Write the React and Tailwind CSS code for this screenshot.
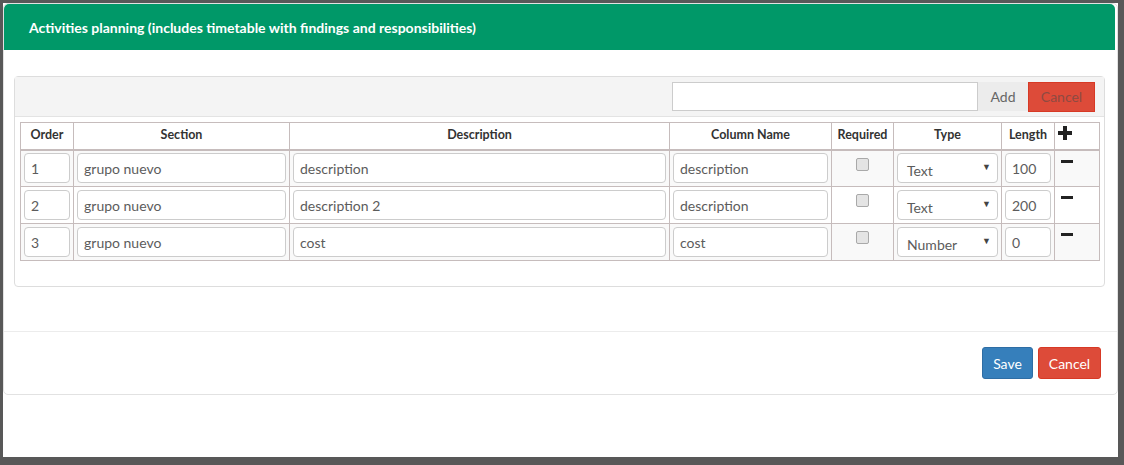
import React from 'react';

const rows = [
  { order: '1', section: 'grupo nuevo', desc: 'description', col: 'description', type: 'Text', len: '100' },
  { order: '2', section: 'grupo nuevo', desc: 'description 2', col: 'description', type: 'Text', len: '200' },
  { order: '3', section: 'grupo nuevo', desc: 'cost', col: 'cost', type: 'Number', len: '0' },
];

const inputCls = 'h-[30px] w-full border border-[#ccc] rounded-[4px] bg-white px-[6px] flex items-center text-[14px] text-[#5c5c5c]';

const App = () => {
  return (
    <div className="w-[1124px] h-[465px] bg-[#585858] overflow-hidden font-['Lato',sans-serif] pt-[3px] pl-[3px]">
      <div className="w-[1115px] h-[454px] bg-white">
        <div className="h-[392px] border border-[#e2e2e2] rounded-[5px] flex flex-col">
          {/* header */}
          <div className="h-[46px] mr-[2px] bg-[#009868] rounded-t-[5px] flex items-center pl-[25px]">
            <h4 className="text-white font-bold text-[14px]">
              Activities planning (includes timetable with findings and responsibilities)
            </h4>
          </div>

          {/* body */}
          <div className="pt-[26px] pl-[10px] pr-[12px] h-[281px]">
            <div className="border border-[#ddd] rounded-[4px] h-[211px]">
              <div className="h-[40px] bg-[#f4f4f4] border-b border-[#e3e3e3] flex items-center justify-end pr-[9px]">
                <div className="w-[306px] h-[29px] border border-[#ccc] bg-white" />
                <div className="w-[50px] h-[29px] bg-[#ececec] flex items-center justify-center text-[14px] text-[#666]">Add</div>
                <div className="w-[67px] h-[30px] bg-[#dd4b39] border border-[#d73925] flex items-center justify-center text-[14px] text-[#8e4a42]">Cancel</div>
              </div>
              <div className="px-[5px] pt-[5px]">
                <table className="table-fixed w-[1079px] border-collapse text-[#333]">
                  <colgroup>
                    <col className="w-[53px]" />
                    <col className="w-[216px]" />
                    <col className="w-[380px]" />
                    <col className="w-[162px]" />
                    <col className="w-[62px]" />
                    <col className="w-[108px]" />
                    <col className="w-[53px]" />
                    <col className="w-[45px]" />
                  </colgroup>
                  <thead>
                    <tr className="h-[27px] text-[12.5px] font-bold">
                      <th className="border border-[#c6bcbc] border-b-2">Order</th>
                      <th className="border border-[#c6bcbc] border-b-2">Section</th>
                      <th className="border border-[#c6bcbc] border-b-2">Description</th>
                      <th className="border border-[#c6bcbc] border-b-2">Column Name</th>
                      <th className="border border-[#c6bcbc] border-b-2">Required</th>
                      <th className="border border-[#c6bcbc] border-b-2">Type</th>
                      <th className="border border-[#c6bcbc] border-b-2">Length</th>
                      <th className="border border-[#c6bcbc] border-b-2 text-left align-top pl-[3px] pt-[3px]">
                        <svg width="14" height="14" viewBox="0 0 14 14">
                          <rect x="5" y="0" width="4" height="14" fill="#222" />
                          <rect x="0" y="5" width="14" height="4" fill="#222" />
                        </svg>
                      </th>
                    </tr>
                  </thead>
                  <tbody>
                    {rows.map((r, i) => (
                      <tr key={r.order} className={`h-[37px] ${i % 2 === 0 ? 'bg-[#f9f9f9]' : 'bg-white'}`}>
                        <td className="border border-[#c6bcbc] px-[3px] align-middle">
                          <div className={inputCls}>{r.order}</div>
                        </td>
                        <td className="border border-[#c6bcbc] px-[3px] align-middle">
                          <div className={`${inputCls} bg-[#eeeeee]`}>{r.section}</div>
                        </td>
                        <td className="border border-[#c6bcbc] px-[3px] align-middle">
                          <div className={inputCls}>{r.desc}</div>
                        </td>
                        <td className="border border-[#c6bcbc] px-[3px] align-middle">
                          <div className={inputCls}>{r.col}</div>
                        </td>
                        <td className="border border-[#c6bcbc] align-top pt-[7px]">
                          <div className="mx-auto w-[13px] h-[13px] rounded-[2px] border border-[#a9a9a9] bg-[#e4e4e4]" />
                        </td>
                        <td className="border border-[#c6bcbc] px-[3px] align-middle">
                          <div className="h-[30px] w-full border border-[#ccc] rounded-[4px] bg-white pl-[9px] pr-[6px] pt-[7px] flex justify-between text-[14px] text-[#5c5c5c]">
                            <span className="leading-[20px]">{r.type}</span>
                            <span className="text-[9px] leading-[12px] text-[#444]">▼</span>
                          </div>
                        </td>
                        <td className="border border-[#c6bcbc] px-[3px] align-middle">
                          <div className={inputCls}>{r.len}</div>
                        </td>
                        <td className="border border-[#c6bcbc] align-top pl-[6px] pt-[9px]">
                          <div className="w-[12px] h-[3px] bg-[#222]" />
                        </td>
                      </tr>
                    ))}
                  </tbody>
                </table>
              </div>
            </div>
          </div>

          {/* footer */}
          <div className="flex-1 border-t border-[#ececec] flex items-start justify-end gap-[5px] pt-[15px] pr-[16px]">
            <button className="h-[32px] w-[51px] rounded-[3px] bg-[#367fbb] border border-[#2e6da4] text-white text-[14px]">Save</button>
            <button className="h-[32px] w-[63px] rounded-[3px] bg-[#dd4b39] border border-[#d73925] text-white text-[14px]">Cancel</button>
          </div>
        </div>
      </div>
    </div>
  );
};

export default App;
